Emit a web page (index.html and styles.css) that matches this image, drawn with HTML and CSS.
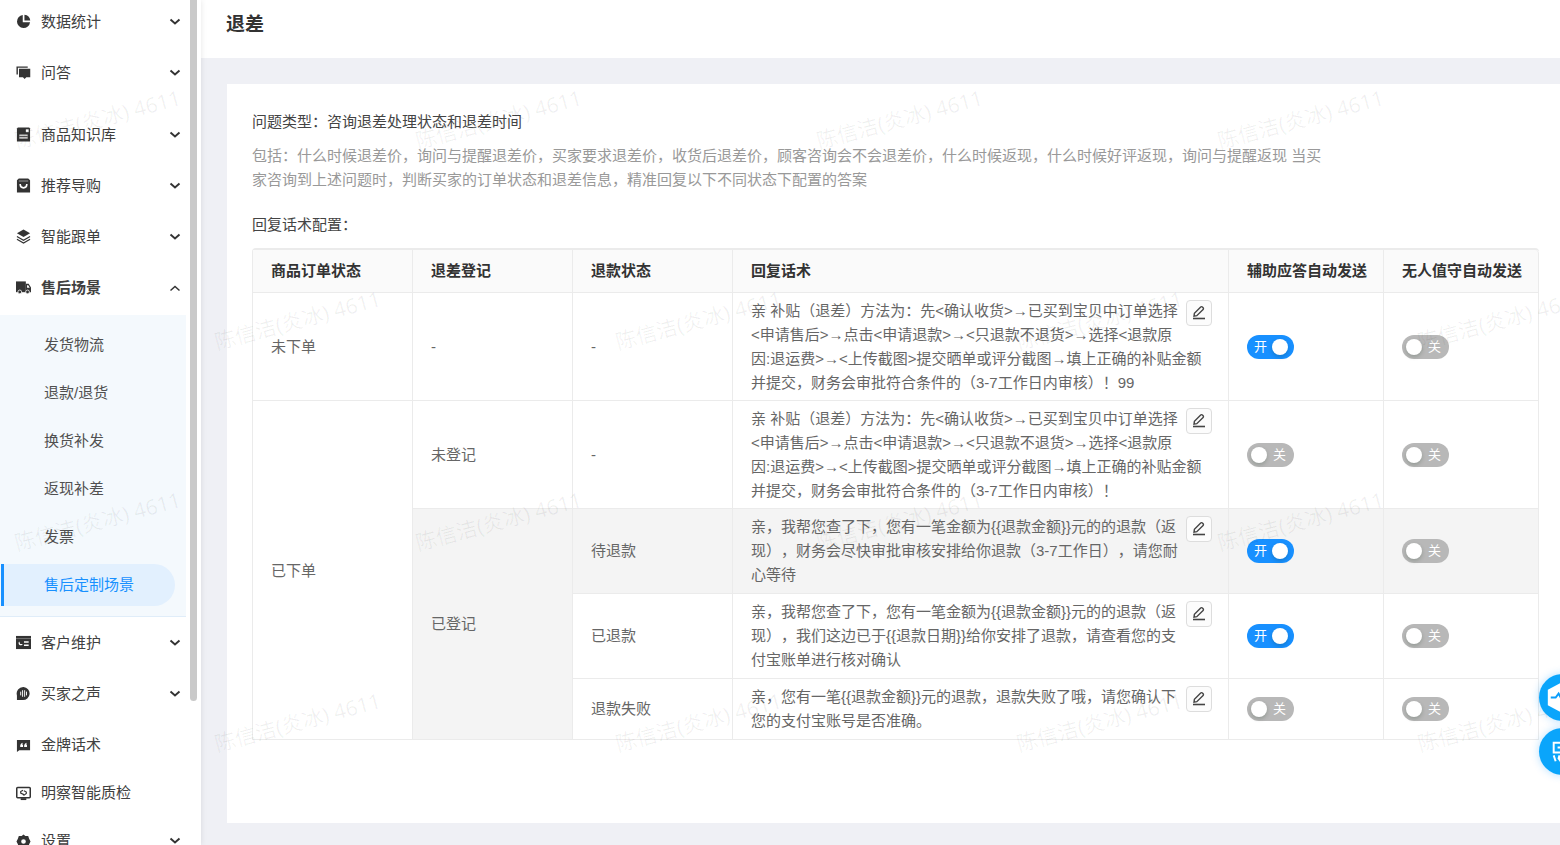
FILE: index.html
```html
<!DOCTYPE html>
<html lang="zh-CN">
<head>
<meta charset="utf-8">
<title>退差</title>
<link rel="stylesheet" href="styles.css">
</head>
<body>
<svg class="defs" aria-hidden="true">
  <symbol id="down" viewBox="0 0 12 12"><path d="M1.500 3.500l4.500 4 4.500-4" fill="none" stroke="currentColor" stroke-width="1.900"/></symbol>
  <symbol id="up" viewBox="0 0 12 12"><path d="M1.500 8.500l4.500-4 4.500 4" fill="none" stroke="currentColor" stroke-width="1.500"/></symbol>
  <symbol id="edit" viewBox="0 0 16 16"><path d="M3 11.200l.4-2.900 6.300-6.300a1.200 1.200 0 0 1 1.700 0l.7.7a1.200 1.200 0 0 1 0 1.700L5.800 10.700z" fill="none" stroke="currentColor" stroke-width="1.400"/><path d="M2 13.500h12" stroke="currentColor" stroke-width="1.600"/></symbol>
</svg>
<div class="app">
  <aside class="sidebar">
    <nav class="nav">
      <div class="group">
        <button class="item"><svg class="icon" viewBox="0 0 16 16"><path d="M7.200 1A7 7 0 1 0 15 8.800H7.200z"/><path d="M9 .8V7h6.200A7 7 0 0 0 9 .8z"/></svg><span>数据统计</span><svg class="chev"><use href="#down"/></svg></button>
        <button class="item"><svg class="icon" viewBox="0 0 16 16"><path d="M.5 1.500h12v1.300H2V10H.5z"/><path d="M3.200 4h12v9h-4.200l-1.800 2-1.800-2H3.200z"/></svg><span>问答</span><svg class="chev"><use href="#down"/></svg></button>
      </div>
      <div class="group">
        <button class="item"><svg class="icon" viewBox="0 0 16 16"><path d="M2 .5h12l1 1v14H1v-14z"/><path d="M10.500 2.500h3v3h-3z" fill="#fff"/><path d="M3.500 8h9v4.500h-9z" fill="#ccc"/><path d="M3.500 10.200h9" stroke="currentColor" stroke-width=".9"/></svg><span>商品知识库</span><svg class="chev"><use href="#down"/></svg></button>
        <button class="item"><svg class="icon" viewBox="0 0 16 16"><path d="M3 .5h10l2 2v13H1v-13z"/><path d="M3 3.200h10" stroke="#aaa" stroke-width=".9"/><path d="M4.500 6.500v.5a3.500 3.500 0 0 0 7 0v-.5" fill="none" stroke="#fff" stroke-width="1.700"/></svg><span>推荐导购</span><svg class="chev"><use href="#down"/></svg></button>
        <button class="item"><svg class="icon" viewBox="0 0 16 16"><path d="M8 .5l7 4-7 4-7-4z"/><path d="M1 8l7 4 7-4M1 11l7 4 7-4" fill="none" stroke="currentColor" stroke-width="1.300"/></svg><span>智能跟单</span><svg class="chev"><use href="#down"/></svg></button>
        <button class="item open" aria-expanded="true"><svg class="icon" viewBox="0 0 16 16"><path d="M0 1.500h10.500v11.500H0z"/><path fill-rule="evenodd" d="M10.500 4h3L16 8v5h-5.500zM11.800 5.500v2.800h2.800L13 5.500z"/><circle cx="4" cy="12.700" r="2" stroke="#fff" stroke-width=".8"/><circle cx="12.300" cy="12.700" r="2" stroke="#fff" stroke-width=".8"/></svg><span>售后场景</span><svg class="chev"><use href="#up"/></svg></button>
        <div class="submenu">
          <a href="#">发货物流</a>
          <a href="#">退款/退货</a>
          <a href="#">换货补发</a>
          <a href="#">返现补差</a>
          <a href="#">发票</a>
          <a href="#" class="active">售后定制场景</a>
        </div>
        <button class="item"><svg class="icon" viewBox="0 0 16 16"><path d="M0 1h16v14H0z"/><path d="M0 3.800h16" stroke="#888" stroke-width=".8"/><path d="M8.500 7.500h5M8.500 11h5" stroke="#fff" stroke-width="1.500"/><path d="M3.500 7a2.300 2.300 0 1 0 3.700 2.500H4.500z" fill="#fff"/></svg><span>客户维护</span><svg class="chev"><use href="#down"/></svg></button>
        <button class="item"><svg class="icon" viewBox="0 0 16 16"><path d="M8 1a7 7 0 1 1-1 14H1v-5A7 7 0 0 1 8 1z"/><path d="M5 6v4M7 4.500v7M9.200 4.500v7M11.200 6v4" stroke="#fff" stroke-width="1"/></svg><span>买家之声</span><svg class="chev"><use href="#down"/></svg></button>
      </div>
      <div class="group compact">
        <button class="item"><svg class="icon" viewBox="0 0 16 16"><path d="M1 2h14v11H3.500L1 15z"/><path d="M7.500 5C5 5.500 4.300 7 4.500 9.500h3V7H6.300zM11.700 5C9.200 5.500 8.500 7 8.700 9.500h3V7h-1.200z" fill="#fff"/></svg><span>金牌话术</span></button>
        <button class="item"><svg class="icon" viewBox="0 0 16 16"><rect x=".8" y="1.500" width="14.400" height="11" rx="1" fill="none" stroke="currentColor" stroke-width="1.600"/><path d="M5 13h6v2H5z"/><path d="M7.500 4.500L5 6v1.500l3 1.500V10M8.300 10L11 8V6.500L8.500 5" fill="none" stroke="currentColor" stroke-width="1.200"/></svg><span>明察智能质检</span></button>
        <button class="item"><svg class="icon" viewBox="0 0 16 16"><path fill-rule="evenodd" d="M6 2l2-1.500L10 2h3l1 3 1.500 3-1.500 3-1 3h-3l-2 1.500L6 14H3l-1-3L.5 8 2 5l1-3zM8 5.500a2.500 2.500 0 1 0 0 5 2.500 2.500 0 0 0 0-5z"/></svg><span>设置</span><svg class="chev"><use href="#down"/></svg></button>
      </div>
    </nav>
    <div class="thumb"></div>
  </aside>
  <div class="main">
    <header class="head"><h1>退差</h1></header>
    <main class="card">
      <h2 class="label">问题类型：咨询退差处理状态和退差时间</h2>
      <p class="desc">包括：什么时候退差价，询问与提醒退差价，买家要求退差价，收货后退差价，顾客咨询会不会退差价，什么时候返现，什么时候好评返现，询问与提醒返现 当买家咨询到上述问题时，判断买家的订单状态和退差信息，精准回复以下不同状态下配置的答案</p>
      <h2 class="label">回复话术配置：</h2>
      <table class="table">
        <colgroup><col class="c-state"><col class="c-state"><col class="c-state"><col><col class="c-switch"><col class="c-switch"></colgroup>
        <thead><tr><th>商品订单状态</th><th>退差登记</th><th>退款状态</th><th>回复话术</th><th>辅助应答自动发送</th><th>无人值守自动发送</th></tr></thead>
        <tbody>
          <tr><td>未下单</td><td>-</td><td>-</td>
            <td><div class="reply"><button class="edit" aria-label="编辑"><svg><use href="#edit"/></svg></button>亲 补贴（退差）方法为：先&lt;确认收货&gt;→已买到宝贝中订单选择&lt;申请售后&gt;→点击&lt;申请退款&gt;→&lt;只退款不退货&gt;→选择&lt;退款原因:退运费&gt;→&lt;上传截图&gt;提交晒单或评分截图→填上正确的补贴金额并提交，财务会审批符合条件的（3-7工作日内审核）！99</div></td>
            <td><button class="switch on" role="switch" aria-checked="true">开</button></td><td><button class="switch" role="switch" aria-checked="false">关</button></td></tr>
          <tr><td rowspan="4">已下单</td><td>未登记</td><td>-</td>
            <td><div class="reply"><button class="edit" aria-label="编辑"><svg><use href="#edit"/></svg></button>亲 补贴（退差）方法为：先&lt;确认收货&gt;→已买到宝贝中订单选择&lt;申请售后&gt;→点击&lt;申请退款&gt;→&lt;只退款不退货&gt;→选择&lt;退款原因:退运费&gt;→&lt;上传截图&gt;提交晒单或评分截图→填上正确的补贴金额并提交，财务会审批符合条件的（3-7工作日内审核）！</div></td>
            <td><button class="switch" role="switch" aria-checked="false">关</button></td><td><button class="switch" role="switch" aria-checked="false">关</button></td></tr>
          <tr class="roomy hover"><td rowspan="3">已登记</td><td>待退款</td>
            <td><div class="reply"><button class="edit" aria-label="编辑"><svg><use href="#edit"/></svg></button>亲，我帮您查了下，您有一笔金额为{{退款金额}}元的的退款（返现），财务会尽快审批审核安排给你退款（3-7工作日），请您耐心等待</div></td>
            <td><button class="switch on" role="switch" aria-checked="true">开</button></td><td><button class="switch" role="switch" aria-checked="false">关</button></td></tr>
          <tr class="roomy"><td>已退款</td>
            <td><div class="reply"><button class="edit" aria-label="编辑"><svg><use href="#edit"/></svg></button>亲，我帮您查了下，您有一笔金额为{{退款金额}}元的的退款（返现），我们这边已于{{退款日期}}给你安排了退款，请查看您的支付宝账单进行核对确认</div></td>
            <td><button class="switch on" role="switch" aria-checked="true">开</button></td><td><button class="switch" role="switch" aria-checked="false">关</button></td></tr>
          <tr class="roomy"><td>退款失败</td>
            <td><div class="reply"><button class="edit" aria-label="编辑"><svg><use href="#edit"/></svg></button>亲，您有一笔{{退款金额}}元的退款，退款失败了哦，请您确认下您的支付宝账号是否准确。</div></td>
            <td><button class="switch" role="switch" aria-checked="false">关</button></td><td><button class="switch" role="switch" aria-checked="false">关</button></td></tr>
        </tbody>
      </table>
    </main>
  </div>
  <div class="watermark" aria-hidden="true">
    <div><span>陈信洁(炎冰) 4611</span><span>陈信洁(炎冰) 4611</span><span>陈信洁(炎冰) 4611</span><span>陈信洁(炎冰) 4611</span></div>
    <div><span>陈信洁(炎冰) 4611</span><span>陈信洁(炎冰) 4611</span><span>陈信洁(炎冰) 4611</span><span>陈信洁(炎冰) 4611</span></div>
    <div><span>陈信洁(炎冰) 4611</span><span>陈信洁(炎冰) 4611</span><span>陈信洁(炎冰) 4611</span><span>陈信洁(炎冰) 4611</span></div>
    <div><span>陈信洁(炎冰) 4611</span><span>陈信洁(炎冰) 4611</span><span>陈信洁(炎冰) 4611</span><span>陈信洁(炎冰) 4611</span></div>
  </div>
  <div class="floats">
    <button aria-label="诊断"><svg viewBox="0 0 48 48"><path d="M24 8l15 8v16l-15 8-15-8V16z" fill="#fff"/><path d="M12 24h5l3-4 5 9 4-12 3 7h5" fill="none" stroke="#0a9dfb" stroke-width="2"/></svg></button>
    <button aria-label="客服"><svg viewBox="0 0 48 48"><path d="M34 15H15v10h19M19 20h12M15 28l2 6M21 28l-1 3 3 4M20 31h8M27 28v6" fill="none" stroke="#fff" stroke-width="2"/></svg></button>
  </div>
</div>
</body>
</html>
```
FILE: styles.css
```css
* { box-sizing: border-box; }
body {
  margin: 0;
  font: 15px/24px "Liberation Sans", "Noto Sans CJK SC", sans-serif;
  text-spacing-trim: space-all;
  color: #666;
  overflow: hidden;
}
button { font: inherit; color: inherit; border: 0; background: none; padding: 0; cursor: pointer; }
.defs { display: none; }
.app { position: relative; display: flex; height: 100vh; overflow: hidden; background: #eff0f5; }

.sidebar {
  position: relative;
  z-index: 1;
  flex: 0 0 201px;
  background: #fff;
  box-shadow: 0 0 6px rgba(0, 0, 0, .1);
  overflow: hidden;
}
.nav { width: 186px; margin-top: -4px; color: #404040; }
.group + .group { margin-top: 11px; }
.item { display: flex; align-items: center; width: 100%; height: 51px; padding: 0 5px 0 16px; text-align: left; }
.item span { flex: 1; }
.item.open { font-weight: 700; }
.icon { width: 15px; height: 15px; margin-right: 10px; fill: currentColor; color: #333; }
.chev { width: 12px; height: 12px; color: #333; }
.group + .compact { margin-top: 2px; }
.compact .item { height: 48px; }
.submenu { margin-top: 2px; padding: 6px 0 4px; background: #f4f9fd; border-bottom: 1px solid #e0edf9; }
.submenu a { display: flex; align-items: center; height: 42px; margin: 3px 11px 6px 1px; padding-left: 43px; color: #505050; text-decoration: none; }
.submenu a.active { padding-left: 40px; border-left: 3px solid #1890ff; border-radius: 0 21px 21px 0; background: #e2f0fe; color: #1890ff; }
.thumb { position: absolute; top: 0; right: 4px; width: 7px; height: 701px; border-radius: 0 0 4px 4px; background: #c9c9c9; }

.main { flex: 1; min-width: 0; }
.head { height: 58px; padding: 13px 25px; background: #fff; }
h1 { margin: 0; font-size: 19px; line-height: 24px; color: #333; }
.card { min-height: 739px; margin: 26px 0 0 26px; padding: 26px 21px 26px 25px; background: #fff; }
.label { margin: 0; font-size: 15px; font-weight: 400; line-height: 24px; color: #444; }
.desc { max-width: 1075px; margin: 10px 0 21px; color: #999; }

.table { width: 100%; margin-top: 11px; table-layout: fixed; border-collapse: separate; border-spacing: 0; border: solid #ebebeb; border-width: 2px 0 0 1px; border-radius: 4px 4px 0 0; }
.c-state { width: 160px; }
.c-switch { width: 155px; }
th, td { border: solid #ebebeb; border-width: 0 1px 1px 0; padding: 6px 16px 5px 18px; text-align: left; }
th { height: 43px; padding-top: 5px; background: #fafafa; color: #333; white-space: nowrap; }
th:last-child { border-top-right-radius: 4px; }
.roomy td { padding-bottom: 6px; }
.hover td { background: #f4f4f4; }
.edit { float: right; display: grid; place-items: center; width: 26px; height: 26px; margin: 1px 0 0 8px; border: 1px solid #ddd; border-radius: 4px; background: #fcfcfc; color: #444; }
.edit svg { width: 16px; height: 16px; }
.switch { position: relative; display: block; width: 47px; height: 24px; padding: 0 7px 0 26px; border-radius: 12px; background: #b8b8b8; color: #fff; font-size: 13px; text-align: left; }
.switch::after { content: ""; position: absolute; top: 4px; left: 4px; width: 16px; height: 16px; border-radius: 50%; background: #fff; box-shadow: 0 2px 4px rgba(0, 35, 11, .2); }
.switch.on { padding: 0 26px 0 7px; background: #1890ff; }
.switch.on::after { left: 25px; }

.watermark { position: absolute; inset: 18px 0 0 0; z-index: 2; overflow: hidden; pointer-events: none; font: 21px/32px "Noto Sans", "Noto Sans CJK SC", sans-serif; color: rgba(0, 0, 0, .06); }
.watermark div { display: flex; align-items: center; height: 201px; margin-left: -103px; }
.watermark div:nth-child(even) { margin-left: 97px; }
.watermark span { flex: 0 0 401px; text-align: center; transform: rotate(-15deg); }

.floats { position: absolute; z-index: 3; top: 674px; right: -26px; display: grid; gap: 7px; }
.floats button { width: 47px; height: 47px; border-radius: 50%; background: #0aa5fb; box-shadow: 0 0 8px rgba(10, 150, 255, .3); }
.floats svg { display: block; width: 47px; height: 47px; }
```
